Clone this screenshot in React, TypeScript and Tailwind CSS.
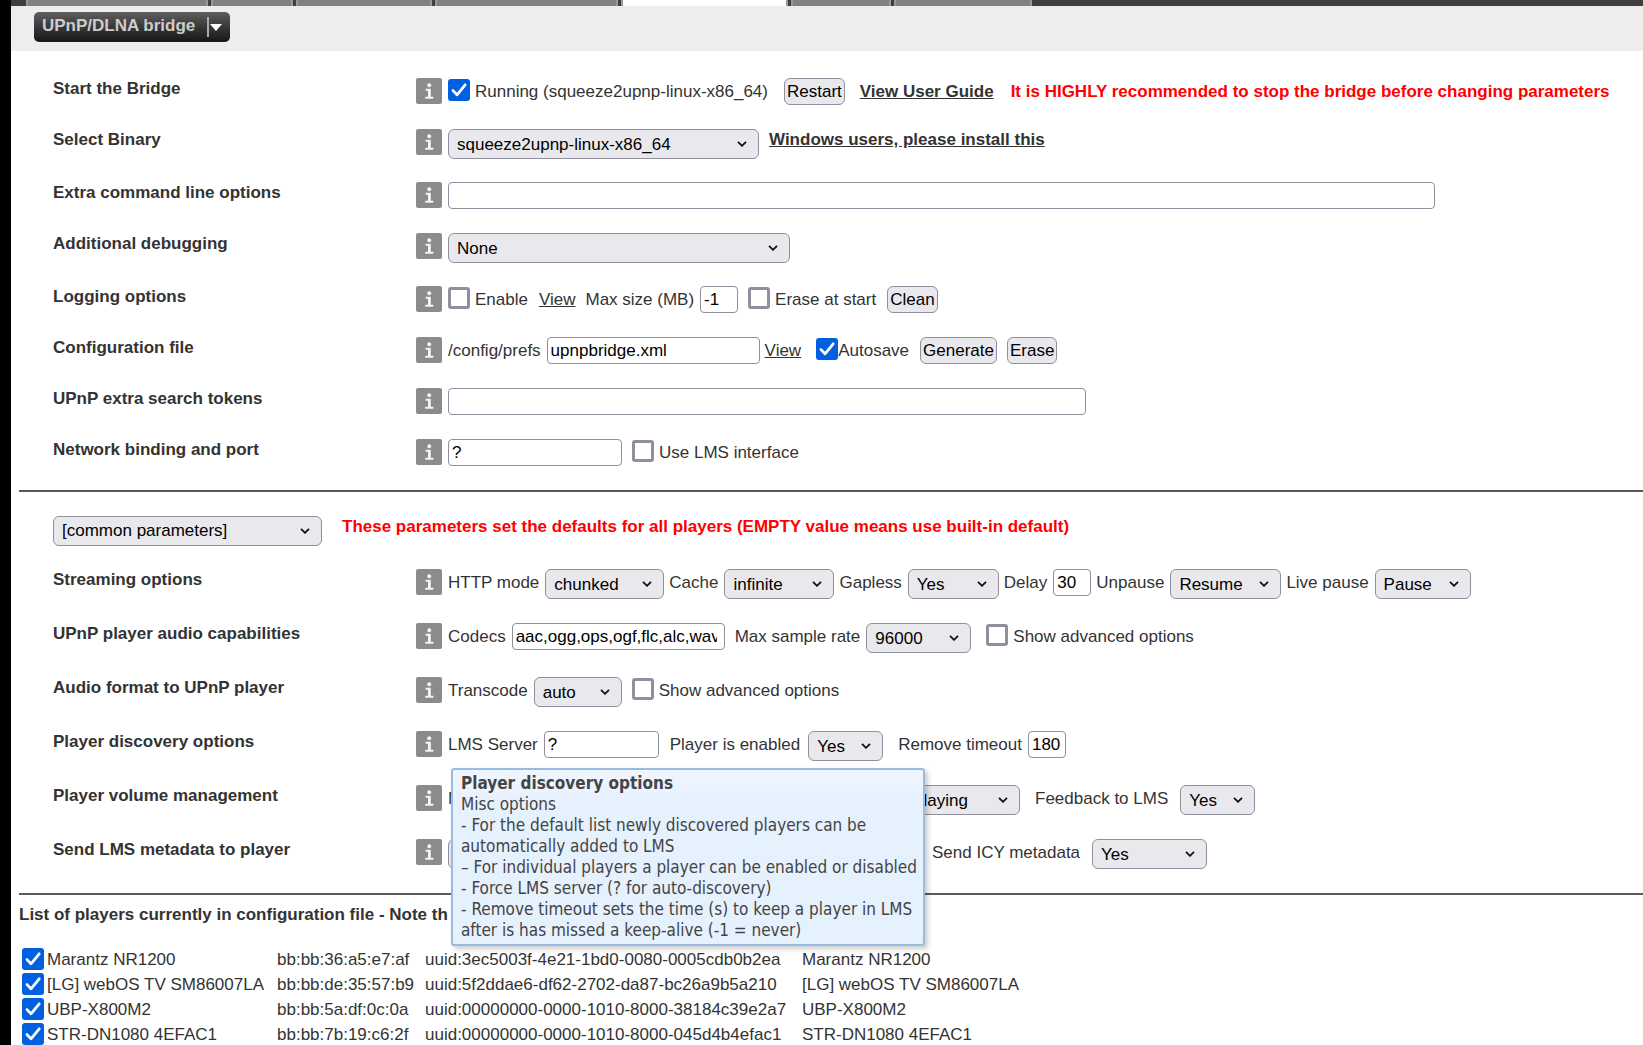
import React from 'react';
import clsx from 'clsx';

const InfoButton: React.FC<{ label: string }> = ({ label }) => (
  <button type="button" aria-label={`Help: ${label}`} className="h-[26px] w-[26px] shrink-0">
    <svg viewBox="0 0 26 26" className="h-full w-full">
      <rect width="26" height="26" rx="2" fill="#8b8b8b" />
      <g fill="#f4f4f4">
        <circle cx="13.2" cy="7.2" r="2" />
        <path d="M9.6 10.8h5.2v8h2.6v2H9.2v-2h2.8v-6H9.6z" />
      </g>
    </svg>
  </button>
);

interface RowProps {
  title: string;
  className?: string;
  children: React.ReactNode;
}

const Row: React.FC<RowProps> = ({ title, className = 'h-[51px]', children }) => (
  <div className={clsx('flex items-start', className)}>
    <h3 className="w-[363px] shrink-0 leading-[22px] font-bold">{title}</h3>
    <InfoButton label={title} />
    <div className="relative ml-[6px] flex grow items-start gap-[5px] leading-[27px] [&_label]:pr-px">
      {children}
    </div>
  </div>
);

interface CheckProps {
  id: string;
  label: string;
  checked?: boolean;
  className?: string;
}

const CheckBox: React.FC<CheckProps> = ({ id, label, checked, className }) => (
  <span className={clsx('mt-px grid h-[22px] w-[22px] shrink-0', className)}>
    <input
      id={id}
      type="checkbox"
      aria-label={label}
      defaultChecked={checked}
      className="peer col-start-1 row-start-1 h-[22px] w-[22px] appearance-none rounded-[3px] border-[3px] border-[#8f8f9d] bg-white checked:border-[#0060df] checked:bg-[#0060df]"
    />
    <svg
      viewBox="0 0 22 22"
      className="pointer-events-none invisible col-start-1 row-start-1 h-[22px] w-[22px] peer-checked:visible"
    >
      <path
        d="M5 11.6l4 4.2 8.2-10"
        fill="none"
        stroke="#fff"
        strokeWidth="2.8"
        strokeLinecap="round"
        strokeLinejoin="round"
      />
    </svg>
  </span>
);

interface SelectProps {
  id: string;
  label?: string;
  value: string;
  className: string;
}

const Select: React.FC<SelectProps> = ({ id, label, value, className }) => (
  <span className={clsx('grid h-[30px] shrink-0', className)}>
    <select
      id={id}
      aria-label={label}
      defaultValue={value}
      className="col-start-1 row-start-1 h-[30px] w-full appearance-none rounded-[6px] border border-[#8f8f9d] bg-[#e9e9ed] pl-2 text-black"
    >
      <option>{value}</option>
    </select>
    <svg
      viewBox="0 0 10 6"
      className="pointer-events-none col-start-1 row-start-1 mr-3 h-[6px] w-[10px] self-center justify-self-end"
    >
      <path d="M1 .8l4 4 4-4" fill="none" stroke="#111" strokeWidth="1.8" />
    </svg>
  </span>
);

interface TextBoxProps {
  id: string;
  label?: string;
  value?: string;
  className: string;
}

const TextBox: React.FC<TextBoxProps> = ({ id, label, value = '', className }) => (
  <input
    id={id}
    type="text"
    aria-label={label}
    defaultValue={value}
    className={clsx('h-[27px] rounded-[4px] border border-[#8f8f9d] bg-white px-[3px] text-black', className)}
  />
);

const Button: React.FC<{ children: React.ReactNode; className?: string }> = ({
  children,
  className = 'ml-[5px]',
}) => (
  <button
    type="button"
    className={clsx(
      'h-[27px] rounded-[6px] border border-[#8f8f9d] bg-[#e9e9ed] px-[2px] leading-[25px] text-black',
      className
    )}
  >
    {children}
  </button>
);

const Divider = () => <hr className="ml-2 border-t-2 border-[#5a5a5a]" />;

// Widths of the server settings tabs
const tabs = [
  { name: 'Basic Settings', width: 'w-[182px]' },
  { name: 'Player', width: 'w-[82px]' },
  { name: 'My Music', width: 'w-[136px]' },
  { name: 'Interface', width: 'w-[183px]' },
  { name: 'Advanced', width: 'w-[167px]', active: true },
  { name: 'Plugins', width: 'w-[100px]' },
  { name: 'Information', width: 'w-[138px]' },
];

const players = [
  { name: 'Marantz NR1200', mac: 'bb:bb:36:a5:e7:af', uuid: 'uuid:3ec5003f-4e21-1bd0-0080-0005cdb0b2ea' },
  { name: '[LG] webOS TV SM86007LA', mac: 'bb:bb:de:35:57:b9', uuid: 'uuid:5f2ddae6-df62-2702-da87-bc26a9b5a210' },
  { name: 'UBP-X800M2', mac: 'bb:bb:5a:df:0c:0a', uuid: 'uuid:00000000-0000-1010-8000-38184c39e2a7' },
  { name: 'STR-DN1080 4EFAC1', mac: 'bb:bb:7b:19:c6:2f', uuid: 'uuid:00000000-0000-1010-8000-045d4b4efac1' },
];

const Tooltip = () => (
  <div
    role="tooltip"
    className="absolute top-[37px] left-[3px] z-10 w-[474px] rounded-[3px] border-2 border-[#99bbe0] bg-[#e8f2fe] bg-linear-to-b from-[#f0f6fe] to-[#e6f1fe] to-20% px-2 py-[3px] font-['DejaVu_Sans_Condensed','Noto_Sans',sans-serif] leading-[21px] text-[#444] shadow-[3px_3px_5px_rgba(0,0,0,0.2)]"
  >
    <p className="font-bold">Player discovery options</p>
    <p>Misc options</p>
    <p>
      - For the default list newly discovered players can be
      <br />
      automatically added to LMS
    </p>
    <p>– For individual players a player can be enabled or disabled</p>
    <p>- Force LMS server (? for auto-discovery)</p>
    <p>
      - Remove timeout sets the time (s) to keep a player in LMS
      <br />
      after is has missed a keep-alive (-1 = never)
    </p>
  </div>
);

const App: React.FC = () => {
  return (
    <div className="h-screen overflow-hidden border-l-[11px] border-black bg-white font-['Liberation_Sans',Arial,sans-serif] text-[17px] whitespace-nowrap text-[#333]">
      {/* Tabs */}
      <nav className="flex h-[6px] gap-[3px] bg-[#3f3f3f] pl-[15px]">
        {tabs.map(tab => (
          <a
            key={tab.name}
            href="#"
            aria-label={tab.name}
            className={clsx(
              'h-full border-x-2 border-[#999]',
              tab.width,
              tab.active ? 'bg-white' : 'bg-[#818181]'
            )}
          />
        ))}
      </nav>

      {/* Page picker */}
      <header className="flex h-[45px] items-start bg-[#ededed] pt-[6px] pl-[23px]">
        <button
          type="button"
          className="flex h-[30px] w-[196px] items-start rounded-[5px] bg-linear-to-b from-[#5f5f5f] to-[#161616] pl-2 font-bold text-[#ccc]"
        >
          <span className="grow text-left leading-[27px]">UPnP/DLNA bridge</span>
          <span className="mt-[5px] h-5 w-[2px] bg-[#aaa]" />
          <svg viewBox="0 0 12 7" className="mt-3 mr-2 ml-px h-[7px] w-3">
            <path d="M0 0h12L6 7z" fill="#fff" />
          </svg>
        </button>
      </header>

      <main>
        <section className="pt-[27px] pl-[42px]">
          <Row title="Start the Bridge">
            <CheckBox id="running" label="Running" checked />
            <label htmlFor="running">Running (squeeze2upnp-linux-x86_64)</label>
            <Button className="ml-[10px]">Restart</Button>
            <a href="#" className="ml-[10px] font-bold underline">
              View User Guide
            </a>
            <strong className="ml-3 text-[#f00]">
              It is HIGHLY recommended to stop the bridge before changing parameters
            </strong>
          </Row>
          <Row title="Select Binary" className="h-[53px]">
            <Select id="binary" label="Select Binary" value="squeeze2upnp-linux-x86_64" className="w-[311px]" />
            <a href="#" className="ml-[5px] leading-[22px] font-bold underline">
              Windows users, please install this
            </a>
          </Row>
          <Row title="Extra command line options">
            <TextBox id="extra" label="Extra command line options" className="w-[987px]" />
          </Row>
          <Row title="Additional debugging" className="h-[53px]">
            <Select id="debug" label="Additional debugging" value="None" className="w-[342px]" />
          </Row>
          <Row title="Logging options">
            <CheckBox id="log" label="Enable" />
            <label htmlFor="log">Enable</label>
            <a href="#" className="ml-[5px] underline">
              View
            </a>
            <label htmlFor="maxsize" className="ml-[5px]">
              Max size (MB)
            </label>
            <TextBox id="maxsize" value="-1" className="w-[38px]" />
            <CheckBox id="eraselog" label="Erase at start" className="ml-[5px]" />
            <label htmlFor="eraselog">Erase at start</label>
            <Button>Clean</Button>
          </Row>
          <Row title="Configuration file">
            <label htmlFor="config">/config/prefs</label>
            <TextBox id="config" value="upnpbridge.xml" className="w-[213px]" />
            <a href="#" className="underline">
              View
            </a>
            <span className="ml-[10px] flex items-start">
              <CheckBox id="autosave" label="Autosave" checked />
              <label htmlFor="autosave">Autosave</label>
            </span>
            <Button>Generate</Button>
            <Button>Erase</Button>
          </Row>
          <Row title="UPnP extra search tokens">
            <TextBox id="tokens" label="UPnP extra search tokens" className="w-[638px]" />
          </Row>
          <Row title="Network binding and port">
            <TextBox id="binding" label="Network binding and port" value="?" className="w-[174px]" />
            <CheckBox id="lmsif" label="Use LMS interface" className="ml-[5px]" />
            <label htmlFor="lmsif">Use LMS interface</label>
          </Row>
        </section>

        <Divider />

        <section className="pt-6 pl-[42px]">
          <div className="flex h-[53px] items-start">
            <Select id="target" label="Player parameters" value="[common parameters]" className="w-[269px]" />
            <strong className="ml-5 leading-[22px] text-[#f00]">
              These parameters set the defaults for all players (EMPTY value means use built-in default)
            </strong>
          </div>
          <Row title="Streaming options" className="h-[54px]">
            <label htmlFor="http">HTTP mode</label>
            <Select id="http" value="chunked" className="w-[119px]" />
            <label htmlFor="cache">Cache</label>
            <Select id="cache" value="infinite" className="w-[110px]" />
            <label htmlFor="gapless">Gapless</label>
            <Select id="gapless" value="Yes" className="w-[91px]" />
            <label htmlFor="delay">Delay</label>
            <TextBox id="delay" value="30" className="w-[38px]" />
            <label htmlFor="unpause">Unpause</label>
            <Select id="unpause" value="Resume" className="w-[111px]" />
            <label htmlFor="livepause">Live pause</label>
            <Select id="livepause" value="Pause" className="w-[96px]" />
          </Row>
          <Row title="UPnP player audio capabilities" className="h-[54px]">
            <label htmlFor="codecs">Codecs</label>
            <TextBox id="codecs" value="aac,ogg,ops,ogf,flc,alc,wav,aif,pcm,mp3" className="w-[213px] pr-[7px]" />
            <label htmlFor="rate" className="ml-[5px]">
              Max sample rate
            </label>
            <Select id="rate" value="96000" className="w-[105px]" />
            <CheckBox id="advcaps" label="Show advanced options" className="ml-[10px]" />
            <label htmlFor="advcaps">Show advanced options</label>
          </Row>
          <Row title="Audio format to UPnP player" className="h-[54px]">
            <label htmlFor="transcode">Transcode</label>
            <Select id="transcode" value="auto" className="w-[88px]" />
            <CheckBox id="advformat" label="Show advanced options" className="ml-[5px]" />
            <label htmlFor="advformat">Show advanced options</label>
          </Row>
          <Row title="Player discovery options" className="h-[54px]">
            <label htmlFor="server">LMS Server</label>
            <TextBox id="server" value="?" className="w-[115px]" />
            <label htmlFor="enabled" className="ml-[6px]">
              Player is enabled
            </label>
            <Select id="enabled" value="Yes" className="ml-[2px] w-[75px]" />
            <label htmlFor="timeout" className="ml-[10px]">
              Remove timeout
            </label>
            <TextBox id="timeout" value="180" className="w-[38px]" />
            <Tooltip />
          </Row>
          <Row title="Player volume management" className="h-[54px]">
            <label htmlFor="volume" className="w-[367px]">
              Mode
            </label>
            <Select id="volume" value="Only when playing" className="w-[200px]" />
            <label htmlFor="feedback" className="ml-[10px]">
              Feedback to LMS
            </label>
            <Select id="feedback" value="Yes" className="ml-[6px] w-[75px]" />
          </Row>
          <Row title="Send LMS metadata to player" className="h-[54px]">
            <Select id="metadata" label="Send LMS metadata to player" value="Yes" className="w-[115px]" />
            <label htmlFor="icy" className="ml-[364px]">
              Send ICY metadata
            </label>
            <Select id="icy" value="Yes" className="ml-[6px] w-[115px]" />
          </Row>
        </section>

        <Divider />

        {/* Known players */}
        <section className="pl-2">
          <h2 className="mt-[9px] leading-[22px] font-bold">List of players currently in configuration file - Note th</h2>
          <table className="mt-[21px]">
            <tbody>
              {players.map((player, i) => (
                <tr key={player.mac} className="h-[25px] leading-[25px]">
                  <td className="w-[258px] p-0">
                    <span className="flex items-start gap-[3px] pl-[3px]">
                      <CheckBox id={`player${i}`} label={player.name} checked />
                      <label htmlFor={`player${i}`}>{player.name}</label>
                    </span>
                  </td>
                  <td className="w-[148px] p-0">{player.mac}</td>
                  <td className="w-[377px] p-0">{player.uuid}</td>
                  <td className="p-0">{player.name}</td>
                </tr>
              ))}
            </tbody>
          </table>
        </section>
      </main>
    </div>
  );
};

export default App;
